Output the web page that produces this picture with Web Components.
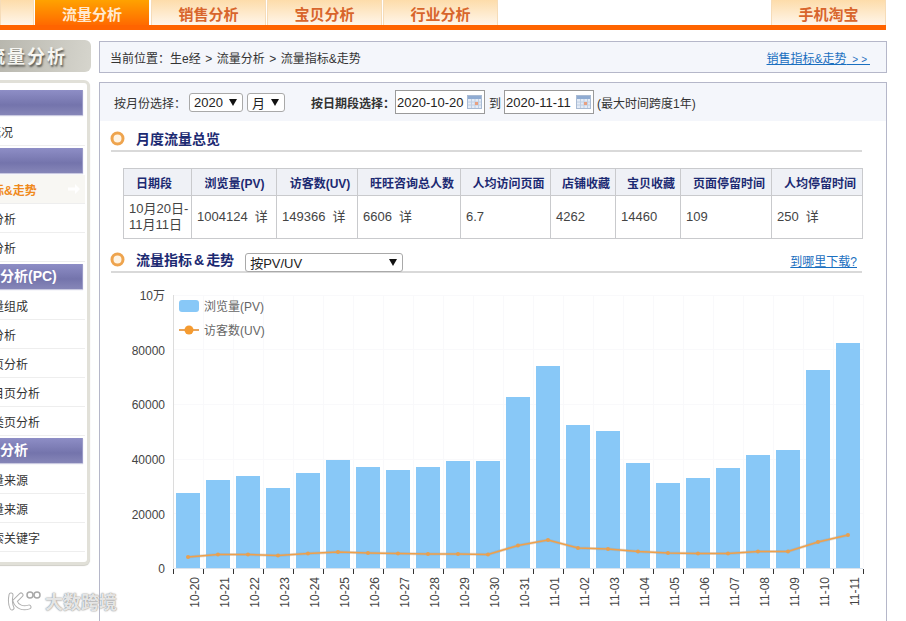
<!DOCTYPE html>
<html lang="zh">
<head>
<meta charset="utf-8">
<title>流量指标&amp;走势</title>
<style>
  html, body { margin: 0; height: 621px; overflow: hidden; background: #fff; }
  body { font: 12px "Liberation Sans", "Noto Sans CJK SC", sans-serif; color: #333; position: relative; }
</style>
</head>
<body>
<top-nav>
  <nav-tab style="width:34px"></nav-tab>
  <nav-tab active style="width:114px;margin-right:2px">流量分析</nav-tab>
  <nav-tab>销售分析</nav-tab>
  <nav-tab>宝贝分析</nav-tab>
  <nav-tab>行业分析</nav-tab>
  <nav-tab slot="right" style="margin-right:0">手机淘宝</nav-tab>
</top-nav>

<page-body>
  <side-bar slot="side" heading="流量分析">
    <side-head>流量概况</side-head>
    <side-item style="padding-left:13px">流量总概况</side-item>
    <div style="height:2px"></div>
    <side-head>流量分析</side-head>
    <side-item active>流量指标&amp;走势</side-item>
    <side-item>访客源分析</side-item>
    <side-item>宝贝页分析</side-item>
    <div style="height:2px"></div>
    <side-head>店铺流量分析(PC)</side-head>
    <side-item>店铺流量组成</side-item>
    <side-item>店铺页分析</side-item>
    <side-item>店铺首页分析</side-item>
    <side-item>店铺栏目页分析</side-item>
    <side-item>店铺分类页分析</side-item>
    <div style="height:2px"></div>
    <side-head>店铺来源分析</side-head>
    <side-item>店铺流量来源</side-item>
    <side-item>店外流量来源</side-item>
    <side-item>站内搜索关键字</side-item>
  </side-bar>

  <bread-crumb>
    当前位置&#xFF1A;生e经<span style="margin:0 4.500px">&gt;</span>流量分析<span style="margin:0 4.500px">&gt;</span>流量指标&amp;走势
    <a slot="link" href="#">销售指标&amp;走势<span style="font-size:10px;letter-spacing:3px">&nbsp;&gt;&gt;</span></a>
  </bread-crumb>

  <main-panel>
    <filter-bar></filter-bar>
    <section-title>月度流量总览</section-title>
    <stat-table></stat-table>
    <section-title style="margin-top:11px">
      流量指标<span style="padding:0 2px">&amp;</span>走势
      <fake-select slot="extra" style="width:158px;margin-left:11px;margin-top:3px">按PV/UV</fake-select>
      <a slot="link" href="#">到哪里下载?</a>
    </section-title>
    <flow-chart></flow-chart>
  </main-panel>
</page-body>

<water-mark>大数跨境</water-mark>

<script>
class TopNav extends HTMLElement {
  constructor() {
    super()
    this.attachShadow({ mode: 'open' }).innerHTML = `
      <style>
        :host { display: flex; width: 886px; height: 25px; border-bottom: 5px solid #ff6400; justify-content: space-between; }
        .left { display: flex; }
      </style>
      <div class="left"><slot></slot></div>
      <slot name="right"></slot>`
  }
}
customElements.define('top-nav', TopNav)

class NavTab extends HTMLElement {
  constructor() {
    super()
    this.attachShadow({ mode: 'open' }).innerHTML = `
      <style>
        :host {
          display: block; box-sizing: border-box; width: 115px; height: 25px; margin-right: 1px;
          text-align: center; font: bold 15px/27px "Noto Sans CJK SC", sans-serif; color: #d8652c;
          background: linear-gradient(#fddcaa, #fff6ea);
          border-left: 1px solid #f6dcb8; border-right: 1px solid #f6dcb8;
        }
        :host([active]) {
          color: #ffe9cf; border: 0;
          background: linear-gradient(#ffa200, #ff6a00);
        }
      </style>
      <slot></slot>`
  }
}
customElements.define('nav-tab', NavTab)

class PageBody extends HTMLElement {
  constructor() {
    super()
    this.attachShadow({ mode: 'open' }).innerHTML = `
      <style>
        :host { display: grid; grid-template-columns: 151px 788px; column-gap: 8px; margin: 10px 0 0 -60px; align-items: start; }
        .side { grid-row: 1 / span 2; }
        .main { display: flex; flex-direction: column; gap: 9px; padding-top: 1px; }
      </style>
      <div class="side"><slot name="side"></slot></div>
      <div class="main"><slot></slot></div>`
  }
}
customElements.define('page-body', PageBody)

class SideBar extends HTMLElement {
  constructor() {
    super()
    this.attachShadow({ mode: 'open' }).innerHTML = `
      <style>
        :host { display: block; }
        h2 {
          margin: 0 0 8px; height: 32px; padding-left: 47px; box-sizing: border-box; border-radius: 0 6px 6px 0;
          font: bold 18px/31px "Noto Sans CJK SC", sans-serif; letter-spacing: 2px; color: #f6f6f2;
          text-shadow: 1px 2px 2px #55554f;
          background: linear-gradient(100deg, #a5a49b, #d6d5cd);
        }
        .box {
          width: 150px; box-sizing: border-box; height: 485px; padding: 7px 2px 0 0; background: #fff;
          border: 3px solid #e1e0d8; border-left: 0; border-radius: 0 6px 6px 0;
          box-shadow: 0 1px 1px #cfcec6;
        }
      </style>
      <h2></h2>
      <div class="box"><slot></slot></div>`
    this.shadowRoot.querySelector('h2').textContent = this.getAttribute('heading')
  }
}
customElements.define('side-bar', SideBar)

class SideHead extends HTMLElement {
  constructor() {
    super()
    this.attachShadow({ mode: 'open' }).innerHTML = `
      <style>
        :host { display: block; height: 27px; box-sizing: border-box; padding-bottom: 2px; }
        div {
          height: 25px; margin-right: 2px; padding-left: 4px; box-sizing: border-box;
          font: bold 14px/25px "Liberation Sans", "Noto Sans CJK SC", sans-serif; color: #fff; white-space: nowrap;
          background: linear-gradient(#8e8ec6, #7474ac 60%, #8686b8);
          border-right: 1px solid #9b9bc8;
          box-shadow: 0 1px 1px #c9c9e0;
        }
      </style>
      <div><slot></slot></div>`
  }
}
customElements.define('side-head', SideHead)

class SideItem extends HTMLElement {
  constructor() {
    super()
    this.attachShadow({ mode: 'open' }).innerHTML = `
      <style>
        :host {
          display: flex; align-items: center; justify-content: space-between; height: 29px; box-sizing: border-box;
          padding: 0 5px 0 16px; border-bottom: 1px solid #eeeeee; color: #333; white-space: nowrap; font-size: 12px;
        }
        :host([active]) { color: #f08a1c; font-weight: bold; background: #f8f7f3; }
        svg { display: none; }
        :host([active]) svg { display: block; }
      </style>
      <span><slot></slot></span>
      <svg width="12" height="10" viewBox="0 0 12 10"><path d="M0 3.5h7V0l5 5-5 5V6.500H0z" fill="#fff"/></svg>`
  }
}
customElements.define('side-item', SideItem)

class BreadCrumb extends HTMLElement {
  constructor() {
    super()
    this.attachShadow({ mode: 'open' }).innerHTML = `
      <style>
        :host {
          display: flex; align-items: center; justify-content: space-between; height: 32px; box-sizing: border-box;
          padding: 0 16px 0 10px; background: #f4f6fb; border: 1px solid #b5b7c9; color: #333; font-size: 12px;
        }
        ::slotted(a) { color: #1a6fc0; }
      </style>
      <span><slot></slot></span>
      <slot name="link"></slot>`
  }
}
customElements.define('bread-crumb', BreadCrumb)

class MainPanel extends HTMLElement {
  constructor() {
    super()
    this.attachShadow({ mode: 'open' }).innerHTML = `
      <style>
        :host { display: block; height: 540px; overflow: hidden; border: 1px solid #b5b7c9; border-bottom: 0; background: #fff; }
      </style>
      <slot></slot>`
  }
}
customElements.define('main-panel', MainPanel)

class FakeSelect extends HTMLElement {
  constructor() {
    super()
    this.attachShadow({ mode: 'open' }).innerHTML = `
      <style>
        :host {
          display: inline-flex; align-items: center; justify-content: space-between; box-sizing: border-box; height: 19px;
          padding: 0 5px 0 4px; background: #fff; border: 1px solid #a9a9a9; border-radius: 3px; font-size: 13px; color: #222;
        }
        i { width: 0; height: 0; border: 4px solid transparent; border-top: 7px solid #111; border-bottom: 0; }
      </style>
      <span><slot></slot></span><i></i>`
  }
}
customElements.define('fake-select', FakeSelect)

class DateInput extends HTMLElement {
  constructor() {
    super()
    this.attachShadow({ mode: 'open' }).innerHTML = `
      <style>
        :host {
          display: inline-flex; align-items: center; justify-content: space-between; box-sizing: border-box;
          width: 90px; height: 24px; padding: 0 2px 0 1px; background: #fff; border: 1px solid #9a9a9a; font-size: 13px; color: #222;
        }
      </style>
      <span><slot></slot></span>
      <svg width="15" height="14" viewBox="0 0 15 14">
        <rect x=".5" y=".5" width="14" height="13" fill="#e3ebf6" stroke="#a9bbd4"/>
        <rect x="1" y="1" width="13" height="3" fill="#8fabd2"/>
        <path d="M1 7h13M1 10h13M4.500 4v9M8 4v9M11.500 4v9" stroke="#c0cfe3" fill="none"/>
        <rect x="8" y="7" width="3" height="3" fill="#e8a080"/>
      </svg>`
  }
}
customElements.define('date-input', DateInput)

class FilterBar extends HTMLElement {
  constructor() {
    super()
    this.attachShadow({ mode: 'open' }).innerHTML = `
      <style>
        :host { display: flex; align-items: center; height: 38px; box-sizing: border-box; padding: 0 0 0 14px; background: #f4f6fb; font-size: 12px; color: #333; white-space: nowrap; }
        b { margin-left: 26px; }
      </style>
      <span style="margin-right:3px">按月份选择&#xFF1A;</span>
      <fake-select style="width:54px;margin-right:4px">2020</fake-select>
      <fake-select style="width:38px">月</fake-select>
      <b>按日期段选择&#xFF1A;</b>
      <date-input>2020-10-20</date-input>
      <span style="margin:0 3px 0 4px">到</span>
      <date-input>2020-11-11</date-input>
      <span style="margin-left:3px">(最大时间跨度1年)</span>`
  }
}
customElements.define('filter-bar', FilterBar)

class SectionTitle extends HTMLElement {
  constructor() {
    super()
    this.attachShadow({ mode: 'open' }).innerHTML = `
      <style>
        :host {
          display: flex; align-items: flex-start; width: 751px; height: 23px; box-sizing: border-box; margin: 8px 0 0 11px;
          border-bottom: 2px solid #d9d9d9; white-space: nowrap;
        }
        svg { margin: 2px 11px 0 -1px; flex: none; }
        b { font: bold 14px/21px "Liberation Sans", "Noto Sans CJK SC", sans-serif; color: #1c2a72; }
        .link { margin: 2px 5px 0 auto; }
        ::slotted(a) { color: #1a6fc0; font-size: 12px; }
      </style>
      <svg width="15" height="15" viewBox="0 0 15 15">
        <circle cx="7.500" cy="7.500" r="5.500" fill="#fff4e4" stroke="#eea44e" stroke-width="3"/>
      </svg>
      <b><slot></slot></b>
      <slot name="extra"></slot>
      <span class="link"><slot name="link"></slot></span>`
  }
}
customElements.define('section-title', SectionTitle)

class StatTable extends HTMLElement {
  constructor() {
    super()
    const cols = [68, 85, 81, 103, 90, 65, 65, 91, 91]
    const heads = ['日期段', '浏览量(PV)', '访客数(UV)', '旺旺咨询总人数', '人均访问页面', '店铺收藏', '宝贝收藏', '页面停留时间', '人均停留时间']
    const row = ['10月20日-<br>11月11日', '1004124<i>详</i>', '149366<i>详</i>', '6606<i>详</i>', '6.7', '4262', '14460', '109', '250<i>详</i>']
    this.attachShadow({ mode: 'open' }).innerHTML = `
      <style>
        :host { display: block; margin: 16px 0 0 23px; }
        table { border-collapse: collapse; table-layout: fixed; width: 739px; }
        th, td { border: 1px solid #c9cacd; padding: 0; white-space: nowrap; }
        th { height: 26px; padding-left: 6px; background: #eff1f6; color: #1c2a72; font-size: 12px; font-weight: bold; }
        th:first-child { padding: 0 7px 0 0; }
        th:nth-child(2) { padding-left: 1px; }
        td { height: 42px; padding-left: 5px; font-size: 13px; line-height: 16px; color: #444; }
        i { font-style: normal; margin-left: 7px; }
      </style>
      <table>
        <colgroup>${cols.map(w => `<col style="width:${w}px">`).join('')}</colgroup>
        <tr>${heads.map(h => `<th>${h}</th>`).join('')}</tr>
        <tr>${row.map(c => `<td>${c}</td>`).join('')}</tr>
      </table>`
  }
}
customElements.define('stat-table', StatTable)

class FlowChart extends HTMLElement {
  constructor() {
    super()
    const days = ['10-20', '10-21', '10-22', '10-23', '10-24', '10-25', '10-26', '10-27', '10-28', '10-29', '10-30', '10-31',
      '11-01', '11-02', '11-03', '11-04', '11-05', '11-06', '11-07', '11-08', '11-09', '11-10', '11-11']
    // tops of the bars and of the line, read off the picture
    const bars = [493, 480, 476, 488, 473, 460, 467, 470, 467, 461, 461, 397, 366, 425, 431, 463, 483, 478, 468, 455, 450, 370, 343]
    const line = [557, 554.5, 554.5, 555.5, 553.5, 552, 553, 553.5, 554, 554, 554.5, 545.5, 540, 548, 549, 551.5, 553, 553.5, 553.5, 551.5, 551.5, 542, 535]
    const ticks = [[295, '10万'], [349.500, '80000'], [404, '60000'], [459, '40000'], [513.500, '20000'], [568, '0']]
    const left = 173.5
    let grid = '', content = '', labels = ''
    for (let i = 0; i <= 23; i++) {
      const x = left + i * 30
      if (i) grid += `<path d="M${x} 295V568" stroke="#f9f9fb"/>`
      content += `<path d="M${x} 569V574" stroke="#333"/>`
    }
    ticks.forEach(([y, t]) => {
      if (y < 568) grid += `<path d="M173 ${Math.floor(y) + .5}H863" stroke="#f9f9fb"/>`
      labels += `<text x="165" y="${y + 5}" text-anchor="end">${t}</text>`
    })
    days.forEach((d, i) => {
      const bx = 176 + i * 30
      content = `<rect x="${bx}" y="${bars[i]}" width="24" height="${568 - bars[i]}" fill="#88c8f7"/>` + content
      const lx = 199 + i * 30
      labels += `<text x="${lx}" y="577" text-anchor="end" transform="rotate(-90 ${lx} 577)">${d}</text>`
    })
    const pts = line.map((y, i) => `${188 + i * 30},${y}`).join(' ')
    const dots = line.map((y, i) => `<circle cx="${188 + i * 30}" cy="${y}" r="2" fill="#e8a050"/>`).join('')
    this.attachShadow({ mode: 'open' }).innerHTML = `
      <style>
        :host { display: block; }
        svg { display: block; }
        text { font: 12px "Liberation Sans", "Noto Sans CJK SC", sans-serif; fill: #444; }
      </style>
      <svg width="786" height="348" viewBox="100 273 786 348">
        ${grid}
        <path d="M173.500 295V568" stroke="#dcdcdc"/>
        ${content}
        <path d="M173 568.500H863" stroke="#dbe3ec"/>
        <polyline points="${pts}" fill="none" stroke="#a8a090" stroke-opacity=".35" stroke-width="3"/>
        <polyline points="${pts}" fill="none" stroke="#f0a04a" stroke-width="1.500"/>
        ${dots}
        ${labels}
        <rect x="179" y="300" width="20" height="12" rx="3" fill="#88c8f7"/>
        <text x="204" y="311" style="fill:#666">浏览量(PV)</text>
        <path d="M179 330H199" stroke="#e8a45a" stroke-width="2" stroke-dasharray="6 8"/>
        <circle cx="189" cy="330" r="4.500" fill="#f59b30"/>
        <text x="204" y="335" style="fill:#666">访客数(UV)</text>
      </svg>`
  }
}
customElements.define('flow-chart', FlowChart)

class WaterMark extends HTMLElement {
  constructor() {
    super()
    const mark = 'M4 6c-1 5-1 9 1 13M14 6 8 12c2 6 8 8 14 6'
    this.attachShadow({ mode: 'open' }).innerHTML = `
      <style>
        :host {
          position: absolute; left: 7px; top: 589px; display: flex; align-items: center; gap: 4px;
          font: bold 18px/24px "Noto Sans CJK SC", sans-serif; color: rgba(255,255,255,.8);
          text-shadow: 0 0 1px #888, 0 0 2px #999;
        }
      </style>
      <svg width="34" height="24" viewBox="0 0 34 24" fill="none" stroke-linecap="round">
        <path d="${mark}" stroke="#b0b0b0" stroke-width="5"/>
        <path d="${mark}" stroke="#fff" stroke-width="3"/>
        <g stroke="#a8a8a8" stroke-width="1.500">
          <circle cx="23" cy="6" r="3"/>
          <circle cx="30" cy="6" r="3"/>
        </g>
      </svg>
      <span><slot></slot></span>`
  }
}
customElements.define('water-mark', WaterMark)
</script>
</body>
</html>
